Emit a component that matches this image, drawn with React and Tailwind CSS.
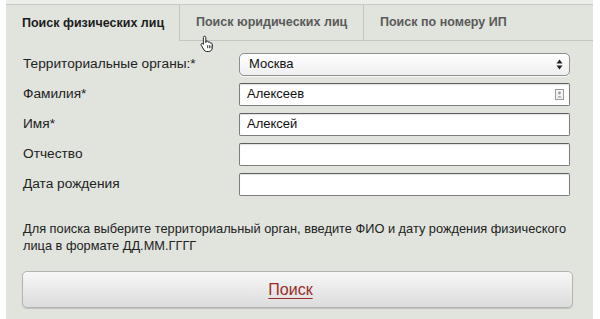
import React from 'react';

const FONT = { fontFamily: '"Liberation Sans", Arial, Helvetica, sans-serif' };

const tabs = [
  { id: 'fl', label: 'Поиск физических лиц', active: true, width: 'w-[173px]' },
  { id: 'ul', label: 'Поиск юридических лиц', active: false, width: 'w-[184px]' },
  { id: 'ip', label: 'Поиск по номеру ИП', active: false, width: 'flex-1' },
];

const rows = [
  { id: 'org', label: 'Территориальные органы:*', type: 'select', value: 'Москва' },
  { id: 'last', label: 'Фамилия*', type: 'input', value: 'Алексеев', contact: true },
  { id: 'first', label: 'Имя*', type: 'input', value: 'Алексей' },
  { id: 'middle', label: 'Отчество', type: 'input', value: '' },
  { id: 'birth', label: 'Дата рождения', type: 'input', value: '' },
];

const SelectArrows = () => (
  <svg width="7" height="11" viewBox="0 0 7 11" aria-hidden="true">
    <path d="M3.5 0.5 L6.5 4.5 L0.5 4.5 Z" fill="#222" />
    <path d="M3.5 10.5 L6.5 6.5 L0.5 6.5 Z" fill="#222" />
  </svg>
);

const ContactIcon = () => (
  <svg width="9" height="11" viewBox="0 0 9 11" aria-hidden="true">
    <rect x="0.5" y="0.5" width="8" height="10" fill="#f4f4f4" stroke="#9a9a9a" />
    <circle cx="4.5" cy="4" r="1.4" fill="#9a9a9a" />
    <path d="M2 8.5 Q4.5 5.5 7 8.5 Z" fill="#9a9a9a" />
  </svg>
);

const HandCursor = () => (
  <svg width="15" height="17" viewBox="0 0 15 17" aria-hidden="true">
    <path
      d="M4.5 1.2c.8 0 1.3.5 1.3 1.3v5.2l.3-1.3c.6-.7 1.7-.6 2 .3l.2.6c.6-.6 1.7-.4 1.9.4l.1.5c.6-.4 1.6-.2 1.8.6.5 1.6.5 3.4-.1 5.2-.5 1.5-1.6 2.5-3.2 2.5H6.6c-1.1 0-2-.6-2.6-1.5L1.2 10.3c-.5-.8 0-1.8 1-1.7.5 0 .9.3 1.200.7V2.5c0-.8.3-1.3 1.1-1.3z"
      fill="#fff"
      stroke="#111"
      strokeWidth="0.9"
      strokeLinejoin="round"
    />
    <path d="M7.6 10.2v3M9.4 10.2v3M11.1 10.5v2.6" stroke="#111" strokeWidth="0.8" />
  </svg>
);

const Field = ({ row }) => {
  if (row.type === 'select') {
    return (
      <div className="w-[331px] h-[23px] rounded-[5px] border border-[#8e8e8e] bg-gradient-to-b from-white to-[#efefef] shadow-[0_1px_0_rgba(255,255,255,0.8)] flex items-center justify-between pl-[9px] pr-[6px] text-[13px] text-[#111]">
        <span>{row.value}</span>
        <SelectArrows />
      </div>
    );
  }
  return (
    <div className="w-[331px] h-[23px] rounded-[2px] border border-[#7d7d7d] border-t-[#5f5f5f] bg-white shadow-[inset_0_1px_1px_rgba(0,0,0,0.12)] flex items-center justify-between pl-[7px] pr-[5px] text-[13px] text-[#111]">
      <span>{row.value}</span>
      {row.contact ? <ContactIcon /> : null}
    </div>
  );
};

export default function App() {
  return (
    <div className="w-[600px] h-[319px] bg-white overflow-hidden" style={FONT}>
      <div className="h-[4px] bg-[#eceee9] ml-[6px] mr-[7px]" />
      <div className="relative ml-[6px] mr-[7px] h-[315px] bg-[#e0e4dc] border-t border-[#c6cac2] flex flex-col">
        <div className="flex h-[36px] shrink-0">
          {tabs.map((tab) => (
            <div
              key={tab.id}
              className={`${tab.width} h-full flex items-center ${
                tab.active
                  ? 'pl-[16px] text-[#1c1c1c]'
                  : 'pl-[16px] border-l border-b border-[#c3c7bf] text-[#5a5a5a]'
              } text-[12.5px] font-bold`}
            >
              {tab.label}
            </div>
          ))}
        </div>

        <div className="pt-[8px] flex flex-col">
          {rows.map((row) => (
            <div key={row.id} className="h-[30px] flex items-center">
              <div className="w-[233px] pl-[17px] text-[13.7px] text-[#222]">{row.label}</div>
              <Field row={row} />
            </div>
          ))}
        </div>

        <p className="mt-[21px] pl-[17px] pr-[14px] text-[12.8px] leading-[17px] text-[#222]">
          Для поиска выберите территориальный орган, введите ФИО и дату рождения физического лица в формате ДД.ММ.ГГГГ
        </p>

        <div className="mt-[17px] pl-[16px] pr-[20px]">
          <button
            type="button"
            className="w-full h-[37px] rounded-[5px] border border-[#b4b4b4] bg-gradient-to-b from-[#f7f7f7] to-[#dcdcdc] shadow-[0_1px_1px_rgba(0,0,0,0.15)] flex items-center justify-center pr-[14px]"
          >
            <span className="text-[16px] text-[#9b2c2c] underline underline-offset-[3px] decoration-[#9b2c2c]">
              Поиск
            </span>
          </button>
        </div>

        <div className="absolute left-[194px] top-[30px]">
          <HandCursor />
        </div>
      </div>
    </div>
  );
}
